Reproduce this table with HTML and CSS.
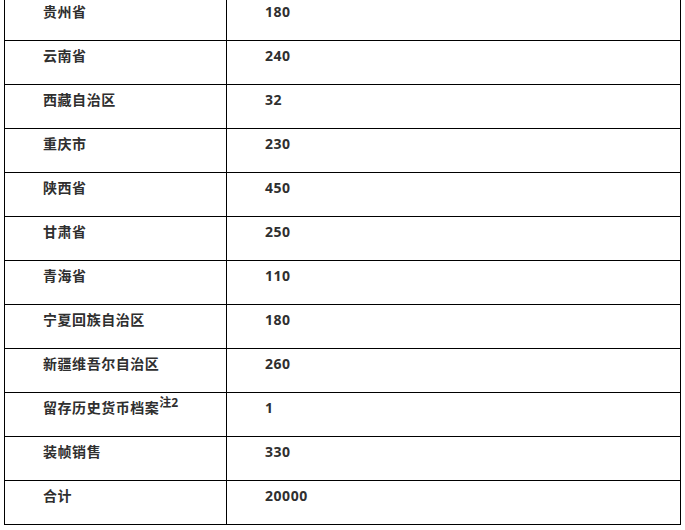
FILE: index.html
```html
<!DOCTYPE html>
<html lang="zh-CN">
<head>
<meta charset="utf-8">
<link rel="stylesheet" href="styles.css">
</head>
<body>
<div class="wrap">
<table class="tbl">
<tbody>
<tr><td class="c1">贵州省</td><td class="c2">180</td></tr>
<tr><td class="c1">云南省</td><td class="c2">240</td></tr>
<tr><td class="c1">西藏自治区</td><td class="c2">32</td></tr>
<tr><td class="c1">重庆市</td><td class="c2">230</td></tr>
<tr><td class="c1">陕西省</td><td class="c2">450</td></tr>
<tr><td class="c1">甘肃省</td><td class="c2">250</td></tr>
<tr><td class="c1">青海省</td><td class="c2">110</td></tr>
<tr><td class="c1">宁夏回族自治区</td><td class="c2">180</td></tr>
<tr><td class="c1">新疆维吾尔自治区</td><td class="c2">260</td></tr>
<tr><td class="c1">留存历史货币档案<sup class="note">注2</sup></td><td class="c2">1</td></tr>
<tr><td class="c1">装帧销售</td><td class="c2">330</td></tr>
<tr><td class="c1">合计</td><td class="c2">20000</td></tr>
</tbody>
</table>
</div>
</body>
</html>
```
FILE: styles.css
```css
html, body {
  margin: 0;
  padding: 0;
  background: #fff;
}
.wrap {
  margin-top: -4px;
  padding-left: 4px;
}
.tbl {
  border-collapse: collapse;
  width: 677px;
  table-layout: fixed;
  font-family: "Open Sans", "Noto Sans CJK SC", sans-serif;
  font-size: 14px;
  font-weight: bold;
  letter-spacing: 0.544px;
  color: #2f2f2f;
}
.tbl td {
  border: 1px solid #000;
  height: 44px;
  box-sizing: border-box;
  padding: 3px 0 0 38px;
  vertical-align: top;
  line-height: 24px;
}
.c1 {
  width: 222px;
}
.note {
  font-size: 12px;
  line-height: 0;
  vertical-align: 6px;
  letter-spacing: 0;
}
```
